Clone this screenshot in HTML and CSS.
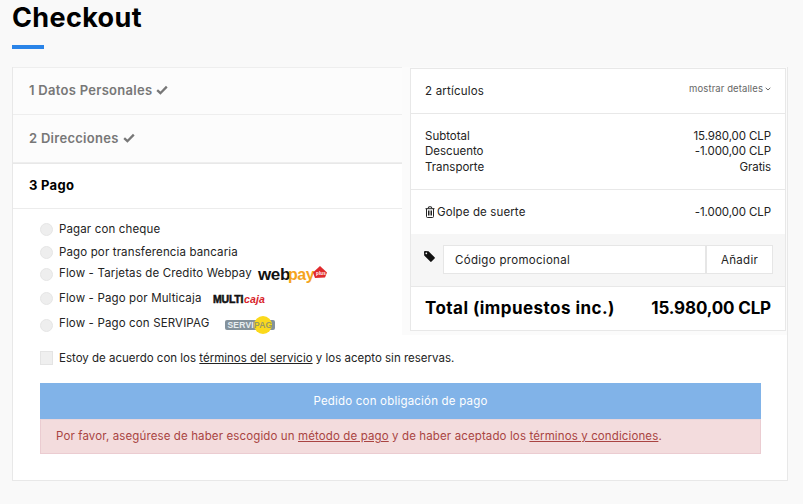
FILE: index.html
```html
<!DOCTYPE html>
<html lang="es">
<head>
<meta charset="utf-8">
<title>Checkout</title>
<link rel="stylesheet" href="styles.css">
</head>
<body>
<h1 class="title">Checkout</h1>
<div class="title-bar"></div>
<main class="card">
  <div class="top">
    <section class="steps">
      <div class="step done"><span>1 Datos Personales</span>
        <svg class="check" viewBox="0 0 12 10"><path d="M1.2 5.2 4.4 8.2 10.8 1.6" /></svg></div>
      <div class="step done"><span>2 Direcciones</span>
        <svg class="check" viewBox="0 0 12 10"><path d="M1.2 5.2 4.4 8.2 10.8 1.6" /></svg></div>
      <div class="step active"><span>3 Pago</span></div>
      <div class="options">
        <div class="option o1"><span class="radio"></span><span>Pagar con cheque</span></div>
        <div class="option o2"><span class="radio"></span><span>Pago por transferencia bancaria</span></div>
        <div class="option o3"><span class="radio"></span><span>Flow - Tarjetas de Credito Webpay</span>
          <svg class="logo webpay" viewBox="0 0 70 22" width="70" height="22">
            <text class="wp-web" x="0" y="16">web</text>
            <text class="wp-pay" x="30" y="16">pay</text>
            <path class="wp-badge" d="M55 8.500 62 2 69 8.500 67 13.500 57 14Z"/>
            <text class="wp-plus" x="58" y="11">plus</text>
          </svg></div>
        <div class="option o4"><span class="radio"></span><span>Flow - Pago por Multicaja</span>
          <svg class="logo multicaja" viewBox="0 0 54 12" width="54" height="12">
            <text class="mc-multi" x="0" y="10">MULTI</text>
            <text class="mc-caja" x="31" y="10">caja</text>
          </svg></div>
        <div class="option o5"><span class="radio"></span><span>Flow - Pago con SERVIPAG</span>
          <svg class="logo servipag" viewBox="0 0 52 20" width="52" height="20">
            <rect class="sp-bar" x="0" y="5" width="50" height="10" rx="2"/>
            <circle class="sp-sun" cx="38" cy="10" r="9"/>
            <text class="sp-servi" x="2.500" y="13">SERVI</text>
            <text class="sp-pag" x="29" y="13">PAG</text>
          </svg></div>
      </div>
    </section>
    <div class="aside">
      <aside class="summary">
        <div class="s-head"><span class="items">2 artículos</span>
          <span class="details">mostrar detalles
            <svg class="chev" viewBox="0 0 6 4"><path d="M.7.8 3 3 5.300.8"/></svg></span></div>
        <div class="s-lines">
          <div class="line"><span>Subtotal</span><span class="amount">15.980,00 CLP</span></div>
          <div class="line"><span>Descuento</span><span class="amount">-1.000,00 CLP</span></div>
          <div class="line"><span>Transporte</span><span class="amount">Gratis</span></div>
        </div>
        <div class="s-voucher">
          <span class="voucher-name">
            <svg class="trash" viewBox="0 0 10 12"><path d="M.5 2.700h9M3 2.500 3.700.8h2.600L7 2.500M1.500 2.700v7.800q0 1 1 1h5q1 0 1-1V2.700M3.500 4.500v5M5 4.500v5M6.500 4.500v5"/></svg>
            <span>Golpe de suerte</span></span>
          <span class="amount">-1.000,00 CLP</span>
        </div>
        <div class="s-promo">
          <svg class="tag" viewBox="0 0 11 11"><path fill-rule="evenodd" d="M0 1Q0 0 1 0L4.500.2 10.800 6.500Q11 7 10.800 7.300L7.300 10.800Q7 11 6.500 10.800L.2 4.500ZM2.300 1.500a.8.8 0 1 0 .01 0Z"/></svg>
          <div class="promo-input">Código promocional</div>
          <div class="promo-btn">Añadir</div>
        </div>
        <div class="s-total"><span class="total-label">Total (impuestos inc.)</span><span class="total-value">15.980,00 CLP</span></div>
      </aside>
    </div>
  </div>
  <section class="confirm">
    <div class="terms"><span class="checkbox"></span>
      <span>Estoy de acuerdo con los <a href="#">términos del servicio</a> y los acepto sin reservas.</span></div>
    <div class="submit">Pedido con obligación de pago</div>
    <div class="alert">Por favor, asegúrese de haber escogido un <a href="#">método de pago</a> y de haber aceptado los <a href="#">términos y condiciones</a>.</div>
  </section>
</main>
</body>
</html>
```
FILE: styles.css
```css
* { box-sizing: border-box; }
html, body { height: 100%; }
body {
  margin: 0;
  padding: 0 15px 0 12px;
  background: #f9f9f9;
  color: #232323;
  font-family: Inter, "Liberation Sans", sans-serif;
  font-size: 11.5px;
  overflow: hidden;
}
a { color: inherit; }
.title {
  margin: 0;
  padding-top: 1px;
  height: 37px;
  font-size: 27px;
  line-height: 34px;
  font-weight: 700;
  letter-spacing: .35px;
  color: #000;
}
.title-bar { width: 32px; height: 4px; margin-top: 8px; background: #2a84e8; }
.card {
  margin-top: 18px;
  width: 776px;
  height: 414px;
  background: #fff;
  border: 1px solid #e8e8e8;
  border-top: 0;
}
.top { display: flex; height: 277px; }
.steps { width: 389px; flex: none; }
.step {
  display: flex;
  align-items: center;
  gap: 4px;
  padding: 0 0 2px 16px;
  font-size: 13px;
  font-weight: 600;
  letter-spacing: .28px;
}
.step.done {
  height: 48px;
  color: #777;
  background: #fcfcfc;
  border-top: 1px solid #eee;
  border-bottom: 1px solid #eee;
}
.step.done + .step.done { border-top: 0; }
.step.done + .step.active { border-top: 1px solid #e8e8e8; }
.step.active { height: 46px; color: #000; font-weight: 700; border-bottom: 1px solid #ececec; }
.check { width: 12px; height: 10px; fill: none; stroke: #777; stroke-width: 2.300; }
.options { padding-left: 27px; }
.option { display: flex; align-items: center; gap: 6px; font-size: 11.500px; letter-spacing: .14px; }
.radio { width: 13px; height: 13px; flex: none; border-radius: 50%; background: #eee; border: 1px solid #e6e6e6; }
.o1 { padding-top: 12px; height: 28px; }
.o2 { height: 24px; padding-top: 6px; }
.o3 { height: 23px; padding-top: 1px; }
.o4 { height: 27px; }
.o5 { height: 24px; }
.o3 .radio, .o4 .radio { margin-top: 2px; }
.o5 .radio { margin-top: 4px; }
.logo { flex: none; overflow: visible; }
.webpay { margin-top: 4px; }
.multicaja { margin: 2px 0 0 5px; }
.servipag { margin: 4px 0 0 10px; }
.wp-web { font: 700 17px "Liberation Sans", sans-serif; letter-spacing: -.4px; fill: #111; }
.wp-pay { font: 700 16px "Liberation Sans", sans-serif; letter-spacing: -.4px; fill: #f5a41d; }
.wp-badge { fill: #e02a2d; }
.wp-plus { font: 700 4.500px "Liberation Sans", sans-serif; fill: #fff; }
.mc-multi { font: 900 10.500px "Liberation Sans", sans-serif; letter-spacing: -.2px; fill: #111; stroke: #111; stroke-width: .5px; }
.mc-caja { font: italic 700 10.500px "Liberation Sans", sans-serif; fill: #d8232a; }
.sp-bar { fill: #84929c; }
.sp-sun { fill: #fbd91c; }
.sp-servi { font: 700 8.500px "Liberation Sans", sans-serif; letter-spacing: .2px; fill: #e8eef0; }
.sp-pag { font: 700 8.500px "Liberation Sans", sans-serif; fill: #9a9a62; }
.aside {
  flex: none;
  width: 385px;
  height: 268px;
  padding: 1px 1px 4px 8px;
  background: #fbfbfb;
}
.summary { height: 263px; background: #fff; border: 1px solid #e8e8e8; }
.s-head, .line, .s-voucher, .s-total { display: flex; justify-content: space-between; align-items: center; }
.s-head { height: 45px; padding: 0 14px; border-bottom: 1px solid #e8e8e8; }
.items { letter-spacing: .2px; }
.details { font-size: 9.500px; color: #666; letter-spacing: .1px; margin-top: -5px; display: flex; align-items: center; gap: 2px; }
.chev { width: 6px; height: 4px; fill: none; stroke: #666; stroke-width: 1; }
.s-lines { height: 76px; padding: 14px 14px 0; border-bottom: 1px solid #e8e8e8; }
.line { height: 15.500px; }
.amount { letter-spacing: -.1px; }
.s-voucher { height: 44px; padding: 0 14px; }
.voucher-name { display: flex; align-items: center; gap: 2px; letter-spacing: .12px; }
.trash { width: 10px; height: 12px; fill: none; stroke: #232323; stroke-width: 1; }
.s-promo {
  display: flex;
  height: 53px;
  padding: 11px 12px 0 13px;
  background: #f6f6f6;
  border-bottom: 1px solid #e8e8e8;
}
.tag { width: 11px; height: 11px; margin: 6px 8px 0 0; fill: #111; flex: none; }
.promo-input, .promo-btn {
  height: 29px;
  display: flex;
  align-items: center;
  background: #fff;
  border: 1px solid #e6e6e6;
  letter-spacing: .3px;
}
.promo-input { width: 264px; padding-left: 11px; }
.promo-btn { width: 67px; justify-content: center; }
.s-total { height: 42px; padding: 0 14px; font-size: 17px; font-weight: 700; color: #000; }
.total-label { letter-spacing: .45px; }
.total-value { letter-spacing: -.15px; }
.confirm { padding: 0 26px 0 27px; }
.terms { display: flex; align-items: center; gap: 6px; height: 14px; margin-top: 7px; }
.checkbox { width: 13px; height: 14px; background: #efefef; border: 1px solid #e4e4e4; }
.submit {
  margin-top: 18px;
  height: 36px;
  display: flex;
  align-items: center;
  justify-content: center;
  background: #81b3e8;
  color: #fff;
  letter-spacing: .2px;
}
.alert {
  height: 35px;
  display: block;
  line-height: 33px;
  padding-left: 15px;
  background: #f3dcdd;
  color: #a94442;
  border: 1px solid #ebccd1;
  border-top-color: #e9d6da;
  letter-spacing: .12px;
}
```
